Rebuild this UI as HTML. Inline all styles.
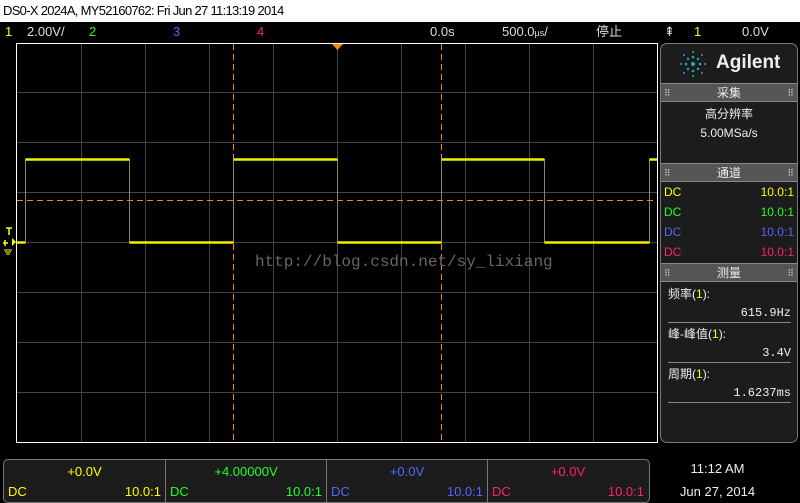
<!DOCTYPE html>
<html><head><meta charset="utf-8"><style>
*{margin:0;padding:0;box-sizing:border-box}
body{width:800px;height:503px;background:#000;position:relative;overflow:hidden;font-family:"Liberation Sans","Noto Sans CJK SC",sans-serif;}
.a{position:absolute;white-space:nowrap;line-height:1}
.title{left:0;top:0;width:800px;height:22px;background:#fff;color:#000;font-size:13px;padding:4px 0 0 3px;letter-spacing:-0.7px}
.t{font-size:13px;color:#ddd}
.panel{left:660px;top:43px;width:138px;height:400px;border:1px solid #777;border-radius:7px;background:#1c1c1c}
.hdr{position:absolute;left:0;width:136px;height:19px;background:#555;border-top:1px solid #888;border-bottom:1px solid #888;color:#eee;font-size:12px;text-align:center;line-height:18px}
.hdr:before{content:"⠿";position:absolute;left:3px;font-size:9px;color:#ccc}
.hdr:after{content:"⠿";position:absolute;right:3px;font-size:9px;color:#ccc}
.r{position:absolute;font-size:12px;line-height:1;white-space:nowrap}
.ln{position:absolute;left:7px;width:123px;height:1px;background:#888}
.bx{position:absolute;top:0;height:42px;width:161px}
.bx .v{position:absolute;top:5px;left:0;width:100%;text-align:center;font-size:13px}
.bx .d{position:absolute;top:25px;left:4px;font-size:13px}
.bx .p{position:absolute;top:25px;right:4px;font-size:13px}
</style></head><body>
<div class="a title">DS0-X 2024A, MY52160762: Fri Jun 27 11:13:19 2014</div>
<div class="a t" style="left:5px;top:25px;color:#ff0">1</div>
<div class="a t" style="left:27px;top:25px">2.00V/</div>
<div class="a t" style="left:89px;top:25px;color:#2f2">2</div>
<div class="a t" style="left:173px;top:25px;color:#56f">3</div>
<div class="a t" style="left:257px;top:25px;color:#f26">4</div>
<div class="a t" style="left:430px;top:25px">0.0s</div>
<div class="a t" style="left:502px;top:25px">500.0<span style="font-size:9px">µs</span>/</div>
<div class="a t" style="left:596px;top:25px">停止</div>
<div class="a t" style="left:664px;top:25px">⇞</div>
<div class="a t" style="left:694px;top:25px;color:#ff0">1</div>
<div class="a t" style="left:742px;top:25px">0.0V</div>
<svg class="a" style="left:0;top:0" width="800" height="503">
<g stroke="#444" stroke-width="1">
<line x1="81.5" y1="44" x2="81.5" y2="442"/><line x1="145.5" y1="44" x2="145.5" y2="442"/><line x1="209.5" y1="44" x2="209.5" y2="442"/><line x1="273.5" y1="44" x2="273.5" y2="442"/><line x1="337.5" y1="44" x2="337.5" y2="442"/><line x1="401.5" y1="44" x2="401.5" y2="442"/><line x1="465.5" y1="44" x2="465.5" y2="442"/><line x1="529.5" y1="44" x2="529.5" y2="442"/><line x1="593.5" y1="44" x2="593.5" y2="442"/>
<line x1="17" y1="92.5" x2="657" y2="92.5"/><line x1="17" y1="142.5" x2="657" y2="142.5"/><line x1="17" y1="192.5" x2="657" y2="192.5"/><line x1="17" y1="242.5" x2="657" y2="242.5"/><line x1="17" y1="292.5" x2="657" y2="292.5"/><line x1="17" y1="342.5" x2="657" y2="342.5"/><line x1="17" y1="392.5" x2="657" y2="392.5"/>
</g>
<rect x="16.5" y="43.5" width="641" height="399" fill="none" stroke="#fff"/>
<g stroke="#f80" stroke-width="1" stroke-dasharray="6,4">
<line x1="233.5" y1="44" x2="233.5" y2="442"/><line x1="441.5" y1="44" x2="441.5" y2="442"/>
<line x1="17" y1="200.5" x2="657" y2="200.5"/></g>
<polygon points="332,44 343,44 337.5,50" fill="#f80"/>
<g stroke="#886" stroke-width="1"><path d="M25.5 159V243M129.5 159V243M233.5 159V243M337.5 159V243M441.5 159V243M544.5 159V243M649.5 159V243"/></g>
<g stroke="#ee0" stroke-width="2.5"><path d="M17 242.5H25.5M25.5 159.5H129.5M129.5 242.5H233.5M233.5 159.5H337.5M337.5 242.5H441.5M441.5 159.5H544.5M544.5 242.5H649.5M649.5 159.5H657"/></g>
<path d="M6 228H12M9 228V235M3 243H8M5 240V246" stroke="#ff0" stroke-width="1.5"/>
<polygon points="12,238 16,242 12,246" fill="#ff0"/>
<path d="M4 250H12M5 252H11M6 254H10" stroke="#ff0"/>
</svg>
<div class="a" style="left:255px;top:254px;font-family:'Liberation Mono',monospace;font-size:16px;color:#666">http://blog.csdn.net/sy_lixiang</div>
<div class="a panel">
<svg style="position:absolute;left:18px;top:6px" width="28" height="28"><g fill="#2ab"><circle cx="14" cy="14" r="2"/><circle cx="14" cy="2" r="1"/><circle cx="14" cy="7" r="1.3"/><circle cx="14" cy="21" r="1.3"/><circle cx="14" cy="26" r="1"/><circle cx="2" cy="14" r="1"/><circle cx="7" cy="14" r="1.3"/><circle cx="21" cy="14" r="1.3"/><circle cx="26" cy="14" r="1"/><circle cx="9" cy="9" r="1.2"/><circle cx="19" cy="9" r="1.2"/><circle cx="9" cy="19" r="1.2"/><circle cx="19" cy="19" r="1.2"/><circle cx="5" cy="5" r="1"/><circle cx="23" cy="5" r="1"/><circle cx="5" cy="23" r="1"/><circle cx="23" cy="23" r="1"/></g></svg>
<div class="r" style="left:55px;top:9px;font-size:19px;font-weight:bold;color:#eee">Agilent</div>
<div class="hdr" style="top:39px">采集</div>
<div class="r" style="left:0;width:136px;text-align:center;top:64px;color:#eee">高分辨率</div>
<div class="r" style="left:0;width:136px;text-align:center;top:83px;color:#eee">5.00MSa/s</div>
<div class="hdr" style="top:119px">通道</div>
<div class="r" style="left:3px;top:142px;color:#ff0">DC</div><div class="r" style="right:3px;top:142px;color:#ff0">10.0:1</div>
<div class="r" style="left:3px;top:162px;color:#2f2">DC</div><div class="r" style="right:3px;top:162px;color:#2f2">10.0:1</div>
<div class="r" style="left:3px;top:182px;color:#56f">DC</div><div class="r" style="right:3px;top:182px;color:#56f">10.0:1</div>
<div class="r" style="left:3px;top:202px;color:#f26">DC</div><div class="r" style="right:3px;top:202px;color:#f26">10.0:1</div>
<div class="hdr" style="top:219px">测量</div>
<div class="r" style="left:7px;top:244px;color:#eee">频率(<span style="color:#ff0">1</span>):</div>
<div class="r" style="right:6px;top:263px;color:#eee;font-family:'Liberation Mono',monospace">615.9Hz</div>
<div class="ln" style="top:278px"></div>
<div class="r" style="left:7px;top:284px;color:#eee">峰-峰值(<span style="color:#ff0">1</span>):</div>
<div class="r" style="right:6px;top:303px;color:#eee;font-family:'Liberation Mono',monospace">3.4V</div>
<div class="ln" style="top:318px"></div>
<div class="r" style="left:7px;top:324px;color:#eee">周期(<span style="color:#ff0">1</span>):</div>
<div class="r" style="right:6px;top:343px;color:#eee;font-family:'Liberation Mono',monospace">1.6237ms</div>
<div class="ln" style="top:358px"></div>
</div>
<div class="a" style="left:3px;top:459px;width:647px;height:44px;border:1px solid #777;border-radius:5px;background:#1c1c1c">
<div class="bx" style="left:0;color:#ff0"><div class="v">+0.0V</div><div class="d">DC</div><div class="p">10.0:1</div></div>
<div class="bx" style="left:161px;border-left:1px solid #777;color:#2f2"><div class="v">+4.00000V</div><div class="d">DC</div><div class="p">10.0:1</div></div>
<div class="bx" style="left:322px;border-left:1px solid #777;color:#56f"><div class="v">+0.0V</div><div class="d">DC</div><div class="p">10.0:1</div></div>
<div class="bx" style="left:483px;border-left:1px solid #777;color:#f26"><div class="v">+0.0V</div><div class="d">DC</div><div class="p">10.0:1</div></div>
</div>
<div class="r a" style="left:660px;width:115px;text-align:center;top:462px;color:#eee;font-size:13px">11:12 AM</div>
<div class="r a" style="left:660px;width:115px;text-align:center;top:485px;color:#eee;font-size:13px">Jun 27, 2014</div>
</body></html>
